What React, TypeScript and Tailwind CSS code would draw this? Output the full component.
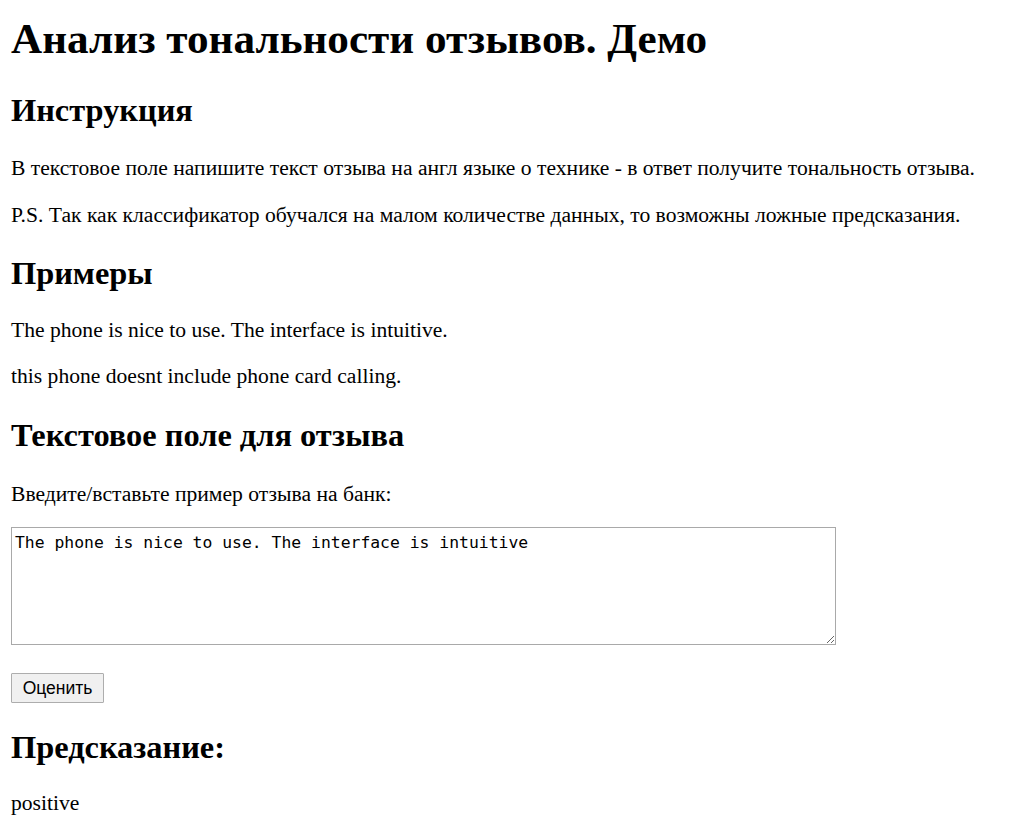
import React from "react";

export default function App() {
  const serif = "font-['Liberation_Serif','Times_New_Roman',serif]";
  const h2 = "text-[32.4px] font-bold leading-[37px]";
  const p = "text-[21.6px] leading-[25px]";
  return (
    <div className={`${serif} bg-white text-black min-h-[833px] px-[11px] pt-[14px]`}>
      <h1 className="text-[43.2px] font-bold leading-[50px]">Анализ тональности отзывов. Демо</h1>

      <h2 className={`mt-[28px] ${h2}`}>Инструкция</h2>
      <p className={`mt-[27px] ${p}`}>
        В текстовое поле напишите текст отзыва на англ языке о технике - в ответ получите тональность отзыва.
      </p>
      <p className={`mt-[22px] ${p}`}>
        P.S. Так как классификатор обучался на малом количестве данных, то возможны ложные предсказания.
      </p>

      <h2 className={`mt-[27px] ${h2}`}>Примеры</h2>
      <p className={`mt-[26px] ${p}`}>The phone is nice to use. The interface is intuitive.</p>
      <p className={`mt-[21px] ${p}`}>this phone doesnt include phone card calling.</p>

      <h2 className={`mt-[28px] ${h2}`}>Текстовое поле для отзыва</h2>
      <form className="block" onSubmit={(e) => e.preventDefault()}>
        <p className={`mt-[28px] ${p}`}>Введите/вставьте пример отзыва на банк:</p>
        <textarea
          defaultValue="The phone is nice to use. The interface is intuitive"
          className="mt-[20px] block w-[825px] h-[118px] border border-[#a9a9a9] bg-white px-[3px] pt-[5px] pb-[3px] font-['DejaVu_Sans_Mono','Liberation_Mono',monospace] text-[16.4px] leading-[19px] text-black outline-none resize"
        />
        <button
          type="submit"
          className="mt-[28px] block w-[93px] h-[30px] border border-[#adadad] rounded-[1px] bg-[#f0f0f0] font-['Liberation_Sans',Arial,sans-serif] text-[17.5px] leading-[20px] text-black"
        >
          Оценить
        </button>
      </form>

      <h2 className={`mt-[26px] ${h2}`}>Предсказание:</h2>
      <p className={`mt-[25px] ${p}`}>positive</p>
    </div>
  );
}
